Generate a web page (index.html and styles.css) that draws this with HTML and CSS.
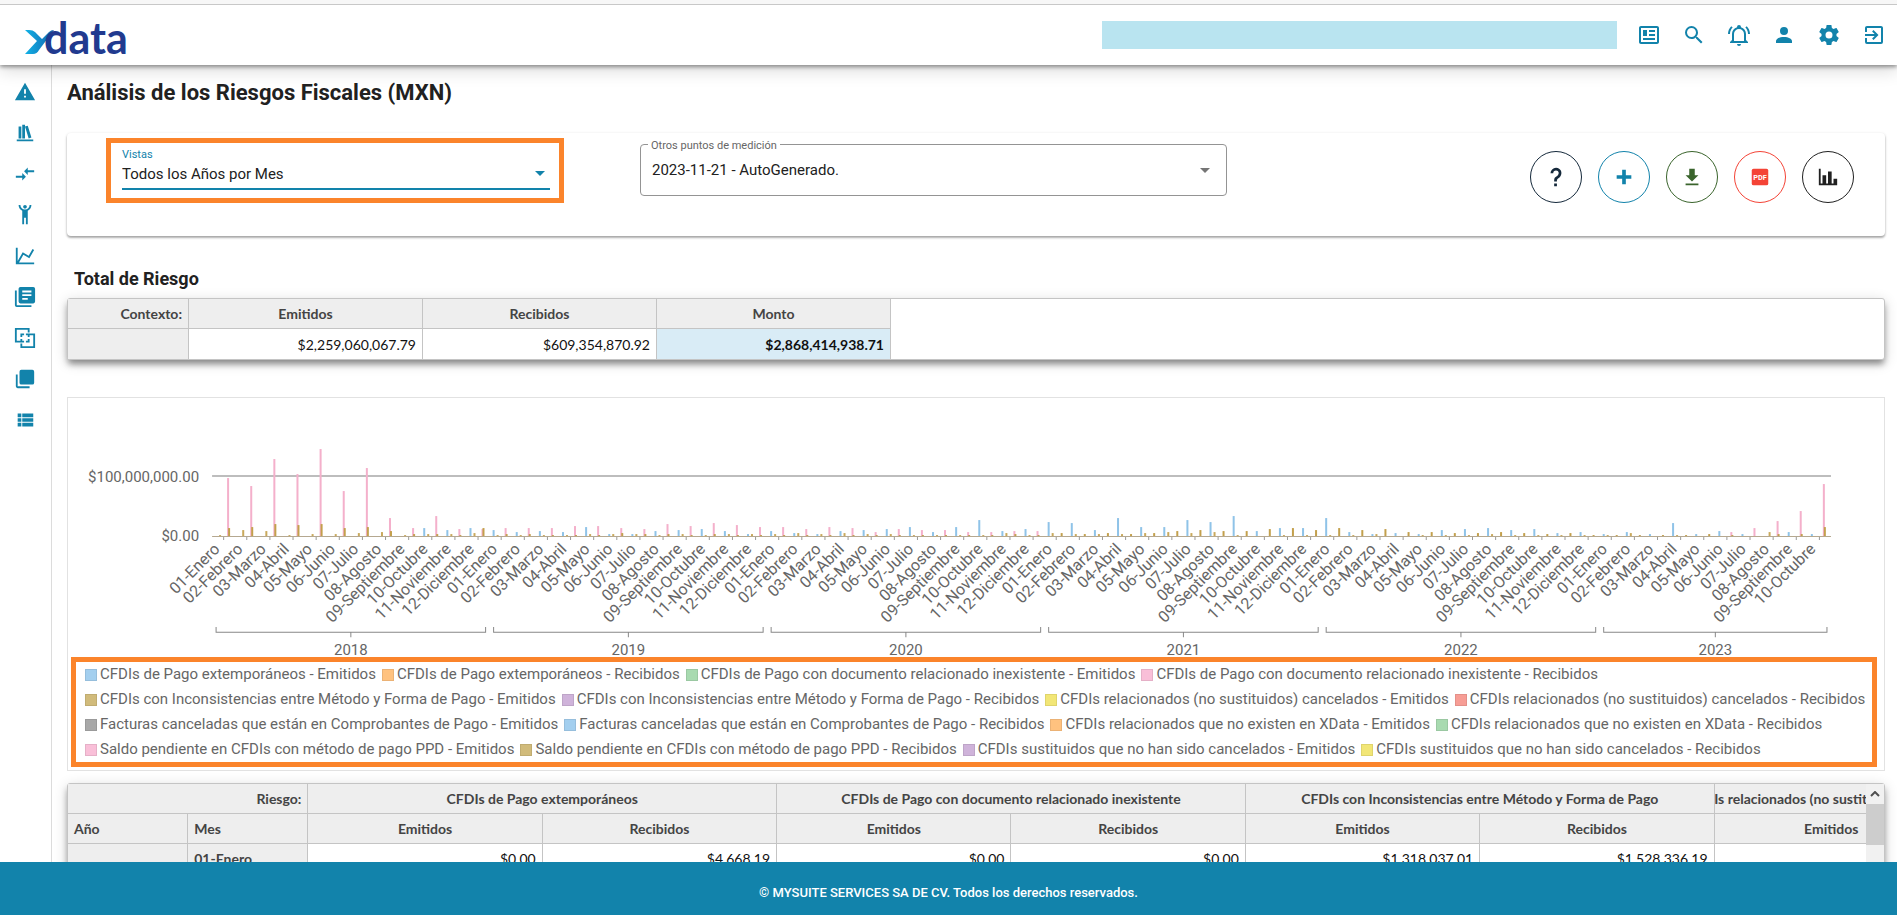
FILE: index.html
```html
<!DOCTYPE html>
<html lang="es">
<head>
<meta charset="utf-8">
<title>XData - Análisis de los Riesgos Fiscales</title>
<link rel="stylesheet" href="styles.css">
</head>
<body>
<header class="topbar">
  <a class="logo" href="#" aria-label="xdata">
    <svg width="108" height="52" viewBox="0 0 108 52">
      <defs><linearGradient id="lg" x1="0" x2="1"><stop offset="0" stop-color="#11b2e6"/><stop offset="1" stop-color="#1463ae"/></linearGradient></defs>
      <path d="M1 21H5Q9 21 11 23L18 30L25 23Q27 21 30 21L15 41Q13 45 9 45H1L13 32Z" fill="url(#lg)"/>
      <text class="logo-text" x="20" y="45">data</text>
    </svg>
  </a>
  <div class="account-name"></div>
  <nav class="top-actions">
    <button class="icon-btn" aria-label="Noticias"><svg class="icon" viewBox="0 0 24 24"><path d="M20 5V19H4V5H20M20 3H4C2.89 3 2 3.89 2 5V19C2 20.11 2.89 21 4 21H20C21.11 21 22 20.11 22 19V5C22 3.89 21.11 3 20 3M18 15H6V17H18V15M10 7H6V13H10V7M12 9H18V7H12V9M18 11H12V13H18V11Z"/></svg></button>
    <button class="icon-btn" aria-label="Buscar"><svg class="icon" viewBox="0 0 24 24"><path d="M9.5,3A6.5,6.5 0 0,1 16,9.5C16,11.11 15.41,12.59 14.44,13.73L14.71,14H15.5L20.5,19L19,20.5L14,15.5V14.71L13.73,14.44C12.59,15.41 11.11,16 9.5,16A6.5,6.5 0 0,1 3,9.5A6.5,6.5 0 0,1 9.5,3M9.5,5C7,5 5,7 5,9.5C5,12 7,14 9.5,14C12,14 14,12 14,9.5C14,7 12,5 9.5,5Z"/></svg></button>
    <button class="icon-btn" aria-label="Notificaciones"><svg class="icon" viewBox="0 0 24 24"><path d="M10,21H14A2,2 0 0,1 12,23A2,2 0 0,1 10,21M21,19V20H3V19L5,17V11C5,7.9 7.03,5.17 10,4.29C10,4.19 10,4.1 10,4A2,2 0 0,1 12,2A2,2 0 0,1 14,4C14,4.1 14,4.19 14,4.29C16.97,5.17 19,7.9 19,11V17L21,19M17,11A5,5 0 0,0 12,6A5,5 0 0,0 7,11V18H17V11M19.75,3.19L18.33,4.61C20.04,6.3 21,8.6 21,11H23C23,8.07 21.84,5.25 19.75,3.19M1,11H3C3,8.6 3.96,6.3 5.67,4.61L4.25,3.19C2.16,5.25 1,8.07 1,11Z"/></svg></button>
    <button class="icon-btn" aria-label="Usuario"><svg class="icon" viewBox="0 0 24 24"><path d="M12,4A4,4 0 0,1 16,8A4,4 0 0,1 12,12A4,4 0 0,1 8,8A4,4 0 0,1 12,4M12,14C16.42,14 20,15.79 20,18V20H4V18C4,15.79 7.58,14 12,14Z"/></svg></button>
    <button class="icon-btn" aria-label="Configuración"><svg class="icon" viewBox="0 0 24 24"><path d="M12,15.5A3.5,3.5 0 0,1 8.5,12A3.5,3.5 0 0,1 12,8.5A3.5,3.5 0 0,1 15.5,12A3.5,3.5 0 0,1 12,15.5M19.43,12.97C19.47,12.65 19.5,12.33 19.5,12C19.5,11.67 19.47,11.34 19.43,11L21.54,9.37C21.73,9.22 21.78,8.95 21.66,8.73L19.66,5.27C19.54,5.05 19.27,4.96 19.05,5.05L16.56,6.05C16.04,5.66 15.5,5.32 14.87,5.07L14.5,2.42C14.46,2.18 14.25,2 14,2H10C9.75,2 9.54,2.18 9.5,2.42L9.13,5.07C8.5,5.32 7.96,5.66 7.44,6.05L4.95,5.05C4.73,4.96 4.46,5.05 4.34,5.27L2.34,8.73C2.21,8.95 2.27,9.22 2.46,9.37L4.57,11C4.53,11.34 4.5,11.67 4.5,12C4.5,12.33 4.53,12.65 4.57,12.97L2.46,14.63C2.27,14.78 2.21,15.05 2.34,15.27L4.34,18.73C4.46,18.95 4.73,19.03 4.95,18.95L7.44,17.94C7.96,18.34 8.5,18.68 9.13,18.93L9.5,21.58C9.54,21.82 9.75,22 10,22H14C14.25,22 14.46,21.82 14.5,21.58L14.87,18.93C15.5,18.67 16.04,18.34 16.56,17.94L19.05,18.95C19.27,19.03 19.54,18.95 19.66,18.73L21.66,15.27C21.78,15.05 21.73,14.78 21.54,14.63L19.43,12.97Z"/></svg></button>
    <button class="icon-btn" aria-label="Salir"><svg class="icon" viewBox="0 0 24 24"><path d="M19,3H5C3.89,3 3,3.89 3,5V9H5V5H19V19H5V15H3V19A2,2 0 0,0 5,21H19A2,2 0 0,0 21,19V5C21,3.89 20.1,3 19,3M10.08,15.58L11.5,17L16.5,12L11.5,7L10.08,8.41L12.67,11H3V13H12.67L10.08,15.58Z"/></svg></button>
  </nav>
</header>

<div class="body">
  <nav class="sidebar">
    <a href="#" aria-label="Riesgos"><svg class="icon" viewBox="0 0 24 24"><path d="M13 14H11V9H13M13 18H11V16H13M1 21H23L12 2L1 21Z"/></svg></a>
    <a href="#" aria-label="Catálogos"><svg class="icon" viewBox="0 0 24 24"><path d="M9 3V18H12V3H9M12 5L16 18L19 17L15 4L12 5M5 5V18H8V5H5M3 19V21H21V19H3Z"/></svg></a>
    <a href="#" aria-label="Comparar"><svg class="icon" viewBox="0 0 24 24"><path d="M9,14H2V16H9V19L13,15L9,11V14M15,13V10H22V8H15V5L11,9L15,13Z"/></svg></a>
    <a href="#" aria-label="Nómina"><svg class="icon" viewBox="0 0 24 24"><path d="M5,1C5,3.7 6.56,6.16 9,7.32V22H11V15H13V22H15V7.31C17.44,6.16 19,3.7 19,1H17A5,5 0 0,1 12,6A5,5 0 0,1 7,1M12,1C10.89,1 10,1.89 10,3C10,4.11 10.89,5 12,5C13.11,5 14,4.11 14,3C14,1.89 13.11,1 12,1Z"/></svg></a>
    <a href="#" aria-label="Gráficas"><svg class="icon" viewBox="0 0 24 24"><path d="M16,11.78L20.24,4.45L21.97,5.45L16.74,14.5L10.23,10.75L5.46,19H22V21H2V3H4V17.54L9.5,8L16,11.78Z"/></svg></a>
    <a href="#" aria-label="Reportes"><svg class="icon" viewBox="0 0 24 24"><path fill-rule="evenodd" d="M3,5H1V21A2,2 0 0,0 3,23H19V21H3V5M21,1H7A2,2 0 0,0 5,3V17A2,2 0 0,0 7,19H21A2,2 0 0,0 23,17V3A2,2 0 0,0 21,1M19 7H9V5H19V7M19 11H9V9H19V11M15 15H9V13H15V15"/></svg></a>
    <a href="#" aria-label="Cruces"><svg class="icon" viewBox="0 0 24 24"><path fill="none" stroke="currentColor" stroke-width="2" d="M7 16H2V2H16V6M17 8H22V22H8V18M8 11V8H11M13 8H16V11M16 13V16H13M11 16H8V13"/></svg></a>
    <a href="#" aria-label="Colecciones"><svg class="icon" viewBox="0 0 24 24"><path d="M4,7H2V20A2,2 0 0,0 4,22H17V20H4V7M20,2H8A2,2 0 0,0 6,4V16A2,2 0 0,0 8,18H20A2,2 0 0,0 22,16V4A2,2 0 0,0 20,2Z"/></svg></a>
    <a href="#" aria-label="Listas"><svg class="icon" viewBox="0 0 24 24"><path d="M9,5V9H21V5M9,19H21V15H9M9,14H21V10H9M4,9H8V5H4M4,19H8V15H4M4,14H8V10H4V14Z"/></svg></a>
  </nav>

  <main class="content">
    <h1 class="title">Análisis de los Riesgos Fiscales (MXN)</h1>

    <section class="filters">
      <div class="marked view-mark">
        <div class="field field-line">
          <label for="vistas">Vistas</label>
          <select id="vistas"><option>Todos los Años por Mes</option></select>
        </div>
      </div>
      <div class="field field-box">
        <label for="puntos">Otros puntos de medición</label>
        <select id="puntos"><option>2023-11-21 - AutoGenerado.</option></select>
      </div>
      <div class="actions">
        <button class="round help" aria-label="Ayuda"><svg class="icon" viewBox="0 0 24 24"><path d="M10,19H13V22H10V19M12,2C17.35,2.22 19.68,7.62 16.5,11.67C15.67,12.67 14.33,13.33 13.67,14.17C13,15 13,16 13,17H10C10,15.33 10,13.92 10.67,12.92C11.33,11.92 12.67,11.33 13.5,10.67C15.92,8.43 15.32,5.26 12,5A3,3 0 0,0 9,8H6A6,6 0 0,1 12,2Z"/></svg></button>
        <button class="round add" aria-label="Agregar"><svg class="icon" viewBox="0 0 24 24"><path d="M20 14H14V20H10V14H4V10H10V4H14V10H20V14Z"/></svg></button>
        <button class="round download" aria-label="Descargar"><svg class="icon" viewBox="0 0 24 24"><path d="M5,21H19V19H5M19,10H15V3H9V10H5L12,17L19,10Z"/></svg></button>
        <button class="round pdf" aria-label="Exportar a PDF"><svg class="icon" viewBox="0 0 24 24"><rect x="3" y="3" width="18" height="18" rx="2"/><text class="pdf-text" x="12" y="15" text-anchor="middle">PDF</text></svg></button>
        <button class="round chart-btn" aria-label="Gráfica"><svg class="icon" viewBox="0 0 24 24"><path d="M22,21H2V3H4V19H6V10H10V19H12V6H16V19H18V14H22V21Z"/></svg></button>
      </div>
    </section>

    <h2 class="subtitle">Total de Riesgo</h2>
    <div class="grid-wrap">
      <table class="pivot pivot-total">
        <colgroup><col class="c-total"><col class="c-val"><col class="c-val"><col class="c-val"></colgroup>
        <tr><th class="right">Contexto:</th><th>Emitidos</th><th>Recibidos</th><th>Monto</th></tr>
        <tr><th></th><td>$2,259,060,067.79</td><td>$609,354,870.92</td><td class="grand">$2,868,414,938.71</td></tr>
      </table>
    </div>

    <section class="chart-card">
      <svg id="chart" class="chart" viewBox="0 0 1815 259" role="img" aria-label="Riesgo por mes"></svg>
      <div class="marked legend">
        <ul>
          <li class="blue">CFDIs de Pago extemporáneos - Emitidos</li>
          <li class="orange">CFDIs de Pago extemporáneos - Recibidos</li>
          <li class="green">CFDIs de Pago con documento relacionado inexistente - Emitidos</li>
          <li class="pink">CFDIs de Pago con documento relacionado inexistente - Recibidos</li>
        </ul>
        <ul>
          <li class="tan">CFDIs con Inconsistencias entre Método y Forma de Pago - Emitidos</li>
          <li class="purple">CFDIs con Inconsistencias entre Método y Forma de Pago - Recibidos</li>
          <li class="yellow">CFDIs relacionados (no sustituidos) cancelados - Emitidos</li>
          <li class="red">CFDIs relacionados (no sustituidos) cancelados - Recibidos</li>
        </ul>
        <ul>
          <li class="gray">Facturas canceladas que están en Comprobantes de Pago - Emitidos</li>
          <li class="blue">Facturas canceladas que están en Comprobantes de Pago - Recibidos</li>
          <li class="orange">CFDIs relacionados que no existen en XData - Emitidos</li>
          <li class="green">CFDIs relacionados que no existen en XData - Recibidos</li>
        </ul>
        <ul>
          <li class="pink">Saldo pendiente en CFDIs con método de pago PPD - Emitidos</li>
          <li class="tan">Saldo pendiente en CFDIs con método de pago PPD - Recibidos</li>
          <li class="purple">CFDIs sustituidos que no han sido cancelados - Emitidos</li>
          <li class="yellow">CFDIs sustituidos que no han sido cancelados - Recibidos</li>
        </ul>
      </div>
    </section>

    <div class="grid-wrap detail">
      <div class="grid-view">
        <table class="pivot pivot-detail">
          <colgroup><col class="c-key"><col class="c-key"><col class="c-val"><col class="c-val"><col class="c-val"><col class="c-val"><col class="c-val"><col class="c-val"><col class="c-val"></colgroup>
          <tr><th class="right" colspan="2">Riesgo:</th><th colspan="2">CFDIs de Pago extemporáneos</th><th colspan="2">CFDIs de Pago con documento relacionado inexistente</th><th colspan="2">CFDIs con Inconsistencias entre Método y Forma de Pago</th><th class="cut"><span>CFDIs relacionados (no sustituidos) cancelados</span></th></tr>
          <tr><th class="left">Año</th><th class="left">Mes</th><th>Emitidos</th><th>Recibidos</th><th>Emitidos</th><th>Recibidos</th><th>Emitidos</th><th>Recibidos</th><th>Emitidos</th></tr>
          <tr><th></th><th class="left">01-Enero</th><td>$0.00</td><td>$4,668.19</td><td>$0.00</td><td>$0.00</td><td>$1,318,037.01</td><td>$1,528,336.19</td><td></td></tr>
        </table>
      </div>
      <div class="scrollbar">
        <button class="scroll-up" aria-label="Subir"><svg width="10" height="6" viewBox="0 0 10 6"><path d="M1 5L5 1L9 5" fill="none" stroke="#505050" stroke-width="2"/></svg></button>
        <div class="thumb"></div>
      </div>
    </div>
  </main>
</div>

<footer class="footer">© MYSUITE SERVICES SA DE CV. Todos los derechos reservados.</footer>
<script src="chart.js"></script>
</body>
</html>
```
FILE: styles.css
```css
* { box-sizing: border-box; }
body {
  margin: 0;
  height: 100vh;
  display: flex;
  flex-direction: column;
  overflow: hidden;
  background: #fff;
  color: #212121;
  font-family: Roboto, "Liberation Sans", sans-serif;
  font-size: 15px;
}
button { font: inherit; color: inherit; padding: 0; background: none; border: 0; cursor: pointer; }
.icon { display: block; width: 24px; height: 24px; fill: currentColor; }

.topbar {
  flex: none;
  position: relative;
  z-index: 2;
  display: flex;
  align-items: center;
  height: 65px;
  padding: 0 11px 0 24px;
  border-top: 4px solid #f7f7f7;
  background: #fff;
  box-shadow: inset 0 1px #c8c8c8, 0 2px 4px rgba(0,0,0,.4), 0 6px 16px rgba(0,0,0,.14);
}
.logo { display: block; height: 52px; }
.logo svg { display: block; overflow: visible; }
.logo-text { font: 700 43px Lato, sans-serif; fill: #213a8f; }
.account-name { width: 515px; height: 28px; margin-left: auto; background: #b9e4f0; }
.top-actions { display: flex; gap: 21px; margin-left: 20px; color: #1283ab; }

.body { flex: 1; min-height: 0; display: flex; }
.sidebar {
  flex: none;
  width: 52px;
  display: flex;
  flex-direction: column;
  align-items: center;
  gap: 17px;
  padding: 15px 1px 0 0;
  border-right: 1px solid #dcdcdc;
}
.sidebar a { color: #1283ab; }
.sidebar .icon { width: 22px; height: 24px; }

.content { flex: 1; min-width: 0; overflow: hidden; padding: 0 12px 0 15px; }
.title { margin: 13px 0 25px; font-size: 22px; line-height: 30px; font-weight: 700; }

.filters {
  display: flex;
  align-items: flex-start;
  height: 103px;
  padding: 5px 31px 0 39px;
  border-radius: 4px;
  box-shadow: 0 2px 2px rgba(0,0,0,.22), 0 1px 3px rgba(0,0,0,.22);
}
.marked { border: 5px solid #fb842b; }
.view-mark { width: 458px; height: 65px; padding: 5px 9px 0 11px; }
.field { position: relative; }
.field select {
  display: block;
  width: 100%;
  border: 0;
  appearance: none;
  background: none;
  color: #212121;
  font: inherit;
  padding: 0;
}
.field::after {
  content: "";
  position: absolute;
  right: 5px;
  bottom: 12px;
  border: 5px solid transparent;
  border-top-color: currentColor;
  border-bottom: 0;
}
.field-line { color: #1283ab; border-bottom: 2px solid #1283ab; }
.field-line label { display: block; font-size: 11px; line-height: 13px; }
.field-line select { height: 27px; padding-bottom: 2px; }
.field-box {
  width: 587px;
  height: 52px;
  margin: 6px 0 0 76px;
  border: 1px solid #949494;
  border-radius: 4px;
  color: #757575;
}
.field-box::after { right: 16px; bottom: 22px; }
.field-box label {
  position: absolute;
  top: -6px;
  left: 7px;
  padding: 0 3px;
  background: #fff;
  color: #666;
  font-size: 11px;
  line-height: 13px;
}
.field-box select { height: 50px; padding: 0 11px; }
.actions { display: flex; gap: 16px; margin: 13px 0 0 auto; }
.round {
  width: 52px;
  height: 52px;
  display: grid;
  place-items: center;
  border: 1px solid currentColor;
  border-radius: 50%;
}
.round .icon { width: 22px; height: 22px; }
.help { color: #15293b; }
.add { color: #1283ab; }
.download { color: #3a642c; }
.pdf { color: #f44336; }
.pdf-text { font: 700 8px Roboto, sans-serif; fill: #fff; }
.chart-btn { color: #212121; }

.subtitle { margin: 32px 0 9px; padding-left: 7px; font-size: 18px; line-height: 21px; font-weight: 700; }

.grid-wrap {
  display: flex;
  border: 1px solid #c4c4c4;
  border-radius: 3px;
  background: #fff;
  box-shadow: 0 5px 6px -1px rgba(0,0,0,.4), 0 3px 14px rgba(0,0,0,.16);
}
.pivot {
  border-collapse: separate;
  border-spacing: 0;
  table-layout: fixed;
  color: #111;
  font-family: Lato, "Open Sans", sans-serif;
  font-size: 14px;
}
.pivot-total { width: 823px; }
.pivot-detail { width: 1881px; }
.c-total { width: 121px; }
.c-key { width: 120px; }
.c-val { width: 234px; }
.pivot th, .pivot td {
  height: 30px;
  padding: 0 6px;
  border-right: 1px solid #c4c4c4;
  border-bottom: 1px solid #c4c4c4;
  text-align: right;
  white-space: nowrap;
}
.pivot th { background: #eee; color: #444; text-align: center; }
.pivot th.right { text-align: right; }
.pivot th.left { text-align: left; }
.pivot-total tr:last-child > * { border-bottom: 0; }
.pivot td.grand { background: #d9ecf6; font-weight: 700; }
.pivot th.cut { padding: 0; overflow: hidden; }
.cut span { display: flex; justify-content: center; }

.chart-card { margin-top: 37px; border: 1px solid #e2e2e2; padding-bottom: 3px; }
.chart { display: block; width: 100%; overflow: visible; fill: #666; font-size: 15px; }
.month { font-size: 16px; }
.legend { margin: 0 7px 0 3px; padding: 0 0 0 9px; }
.legend ul { display: flex; gap: 6px; margin: 0; padding: 0; list-style: none; }
.legend li {
  display: flex;
  align-items: center;
  gap: 3px;
  color: #666;
  font-size: 15px;
  line-height: 25px;
  white-space: nowrap;
}
.legend li::before { content: ""; width: 10px; height: 10px; background: var(--c); border: 1px solid rgba(0,0,0,.08); }
.blue { --c: #a3cfef; }
.orange { --c: #ffc27f; }
.green { --c: #a8dab0; }
.pink { --c: #f9bfd8; }
.tan { --c: #d1bb7b; }
.purple { --c: #cfb3da; }
.yellow { --c: #f2e676; }
.red { --c: #f79d95; }
.gray { --c: #a8a8a8; }

.detail { margin-top: 12px; }
.grid-view { flex: 1; min-width: 0; overflow: hidden; }
.scrollbar { flex: none; width: 18px; background: #f1f1f1; }
.scroll-up { display: grid; place-items: center; width: 100%; height: 20px; }
.thumb { height: 41px; background: #cdcdcd; }

.footer {
  flex: none;
  position: relative;
  z-index: 1;
  height: 53px;
  padding-top: 9px;
  background: #1283ab;
  color: #fff;
  font-size: 13px;
  font-weight: 500;
  line-height: 44px;
  text-align: center;
}
```
FILE: chart.js
```js
const months = ['01-Enero','02-Febrero','03-Marzo','04-Abril','05-Mayo','06-Junio','07-Julio','08-Agosto','09-Septiembre','10-Octubre','11-Noviembre','12-Diciembre'];

// Per month, in plot units: [facturas, inconsistencias, saldo emitidos, saldo recibidos]
const years = {
  2018: [[0,1,58,8],[0,6,50,9],[0,5,77,12],[0,1,62,11],[0,2,87,12],[0,2,45,8],[0,3,68,9],[0,4,18,5],[0,1,8,2],[8,2,20,2],[6,2,7,1],[8,3,7,8]],
  2019: [[6,1,8,2],[4,1,8,2],[5,1,8,1],[4,1,10,1],[9,2,10,1],[2,2,8,3],[2,2,7,2],[5,1,12,2],[6,2,10,1],[7,1,13,2],[5,2,11,1],[2,2,9,1]],
  2020: [[5,2,9,1],[3,3,7,1],[2,2,9,1],[5,3,8,1],[6,2,4,1],[7,2,7,1],[9,1,6,1],[4,1,6,1],[9,1,4,1],[16,1,4,1],[5,3,5,2],[7,1,5,1]],
  2021: [[14,3,0,3],[13,2,0,2],[6,2,0,3],[18,2,0,2],[9,3,0,3],[9,4,0,5],[16,3,0,6],[14,4,0,5],[20,1,0,5],[5,0,0,7],[8,1,0,8],[8,1,0,6]],
  2022: [[18,1,0,8],[4,1,0,6],[2,2,0,7],[3,0,0,4],[2,1,0,4],[6,1,0,3],[7,1,0,3],[8,2,0,4],[6,1,0,3],[7,1,0,2],[3,1,0,3],[4,1,0,1]],
  2023: [[2,1,0,1],[4,3,0,1],[2,0,0,1],[13,1,0,1],[2,0,0,2],[5,0,4,1],[2,0,8,0],[0,4,15,2],[4,0,25,2],[2,0,52,9]]
};
const series = [
  { color: '#8fc3e8', x: 4 },
  { color: '#c9a95c', x: 8 },
  { color: '#f4b0cb', x: 16 },
  { color: '#c3a04c', x: 17 }
];
const left = 144, right = 1762, axisY = 138, gridY = 78;
const count = Object.values(years).flat().length;
const band = (right - left) / count;
const out = [];
const line = (x1, y1, x2, y2, color, w = 1) =>
  out.push(`<line x1="${x1}" y1="${y1}" x2="${x2}" y2="${y2}" stroke="${color}" stroke-width="${w}"/>`);

line(left, gridY, right, gridY, '#bdbdbd', 2);
out.push(`<text x="131" y="${gridY + 6}" text-anchor="end">$100,000,000.00</text>`);
out.push(`<text x="131" y="${axisY + 5}" text-anchor="end">$0.00</text>`);

let i = 0;
for (const [year, rows] of Object.entries(years)) {
  const start = left + i * band + 4;
  rows.forEach((row, m) => {
    const x0 = left + i * band;
    row.forEach((h, s) => {
      if (h) out.push(`<rect x="${x0 + series[s].x - 1}" y="${axisY - h}" width="2" height="${h}" fill="${series[s].color}"/>`);
    });
    const tx = x0 + band / 2;
    line(tx, axisY, tx, axisY + 4, '#999');
    out.push(`<text class="month" text-anchor="end" transform="translate(${tx - 3} ${axisY + 14}) rotate(-45)">${months[m]}</text>`);
    i++;
  });
  const end = left + i * band - 4, mid = (start + end) / 2;
  out.push(`<path d="M${start} 229V234H${end}V229M${mid} 234V239" fill="none" stroke="#888"/>`);
  out.push(`<text x="${mid}" y="257" text-anchor="middle">${year}</text>`);
}
line(left, axisY + .5, right, axisY + .5, '#b5a890');
document.getElementById('chart').innerHTML = out.join('');
```
